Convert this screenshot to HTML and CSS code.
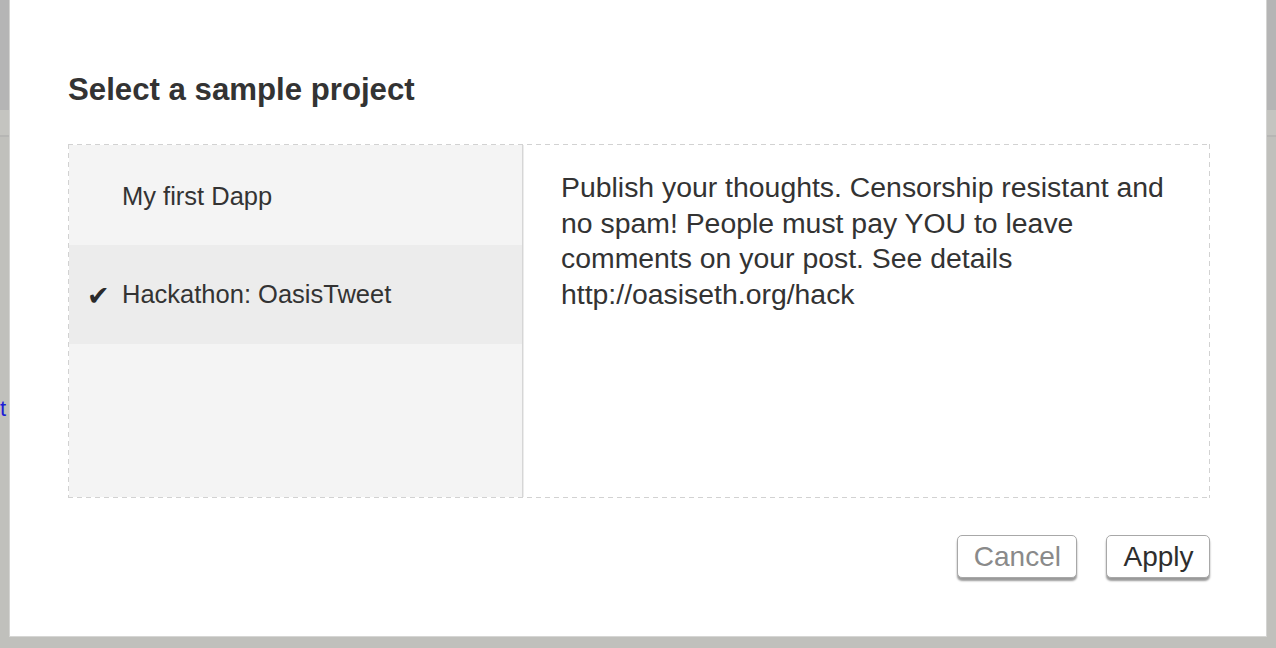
FILE: index.html
```html
<!DOCTYPE html>
<html>
<head>
<meta charset="utf-8">
<link rel="stylesheet" href="styles.css">
</head>
<body>
<div class="page">
  <div class="page-header"></div>
  <div class="page-toolbar"></div>
  <div class="page-content"><a class="page-link" href="#">t</a></div>
</div>
<div class="modal">
  <h2 class="modal-title">Select a sample project</h2>
  <div class="picker">
    <ul class="project-list">
      <li class="project-item"><span class="check"></span><span class="name">My first Dapp</span></li>
      <li class="project-item selected"><span class="check">✔</span><span class="name">Hackathon: OasisTweet</span></li>
    </ul>
    <div class="project-desc">
      <p class="desc-text">Publish your thoughts. Censorship resistant and no spam! People must pay YOU to leave comments on your post. See details http://oasiseth.org/hack</p>
    </div>
  </div>
  <div class="actions">
    <button class="btn btn-cancel">Cancel</button>
    <button class="btn btn-apply">Apply</button>
  </div>
</div>
</body>
</html>
```

FILE: styles.css
```css
html, body {
  margin: 0;
  padding: 0;
}
body {
  width: 1276px;
  height: 648px;
  overflow: hidden;
  background: #c0c0bc;
  font-family: "Liberation Sans", Arial, Helvetica, sans-serif;
  color: #333;
  position: relative;
}
.page {
  display: flex;
  flex-direction: column;
}
.page-header {
  height: 110px;
  background: #b5b5b5;
}
.page-toolbar {
  height: 25px;
  background: #c4c4c0;
  border-bottom: 2px solid #b6b6b4;
}
.page-content {
  padding-top: 259px;
}
.page-link {
  display: block;
  font-size: 22px;
  line-height: 26px;
  color: #1c1cd6;
  text-decoration: none;
}
.modal {
  position: absolute;
  top: 0;
  left: 9px;
  width: 1258px;
  height: 637px;
  box-sizing: border-box;
  background: #fff;
  border-left: 1px solid #d4d4d2;
  border-right: 1px solid #d4d4d2;
  border-bottom: 1px solid #d6d6d4;
  padding: 72px 56px 0 58px;
  display: flex;
  flex-direction: column;
}
.modal-title {
  margin: 0 0 36px 0;
  font-size: 31.2px;
  line-height: 36px;
  font-weight: bold;
  color: #333;
}
.picker {
  display: flex;
  height: 354px;
  box-sizing: border-box;
  padding: 1px;
  background:
    repeating-linear-gradient(90deg, #d2d2d2 0 5px, transparent 5px 9px) top left / 100% 1px no-repeat,
    repeating-linear-gradient(90deg, #d2d2d2 0 5px, transparent 5px 9px) bottom left / 100% 1px no-repeat,
    repeating-linear-gradient(180deg, #d2d2d2 0 5px, transparent 5px 9px) top left / 1px 100% no-repeat,
    repeating-linear-gradient(180deg, #d2d2d2 0 5px, transparent 5px 9px) top right / 1px 100% no-repeat,
    #fff;
}
.project-list {
  list-style: none;
  margin: 0;
  padding: 0;
  width: 453px;
  background: #f4f4f4;
  border-right: 1px solid #d6d6d6;
  box-shadow: 1px 0 0 #ececec;
}
.project-item {
  display: flex;
  align-items: center;
  height: 100px;
  padding-left: 18px;
  font-size: 25.5px;
  color: #333;
}
.project-item:first-child {
  padding-top: 3px;
  height: 97px;
}
.project-item.selected {
  background: #ececec;
  height: 99px;
}
.check {
  width: 35px;
  flex: none;
  font-family: "DejaVu Sans", sans-serif;
  font-size: 27px;
  color: #2a2a2a;
  margin-top: 2px;
}
.project-desc {
  flex: 1;
  padding: 25px 20px 0 38px;
}
.desc-text {
  margin: 0;
  max-width: 628px;
  font-size: 28.4px;
  line-height: 35.6px;
  color: #333;
}
.actions {
  display: flex;
  justify-content: flex-end;
  gap: 29px;
  margin-top: 37px;
}
.btn {
  font-family: "Liberation Sans", Arial, Helvetica, sans-serif;
  font-size: 28px;
  line-height: 41px;
  height: 43px;
  padding: 0 15.5px 0 16px;
  background: #fff;
  border: 1px solid #a8a8a8;
  border-radius: 5px;
  box-shadow: 0 3px 2px rgba(0, 0, 0, 0.4);
  cursor: pointer;
}
.btn-cancel {
  color: #8a8a8a;
}
.btn-apply {
  color: #2e2e2e;
}
```
